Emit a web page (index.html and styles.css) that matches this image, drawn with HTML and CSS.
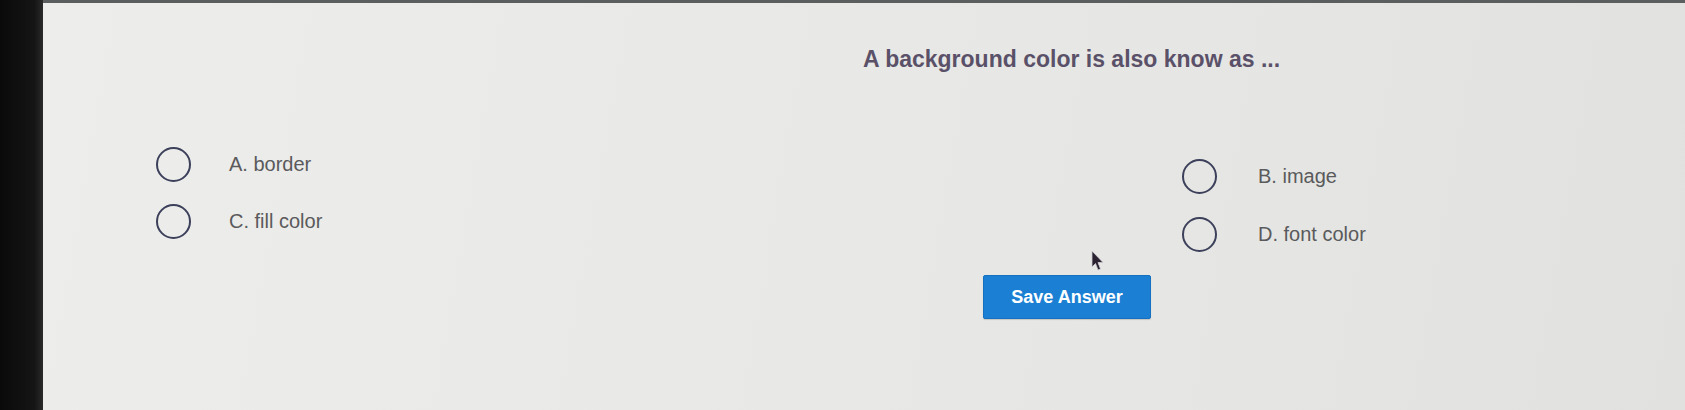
FILE: index.html
```html
<!DOCTYPE html>
<html>
<head>
<meta charset="utf-8">
<link rel="stylesheet" href="styles.css">
</head>
<body>
<div class="screen">
  <div class="bezel"></div>
  <div class="main">
    <h1 class="question">A background color is also know as ...</h1>
    <div class="options">
      <div class="col col-left">
        <label class="option"><span class="radio"></span><span class="label">A. border</span></label>
        <label class="option"><span class="radio"></span><span class="label">C. fill color</span></label>
      </div>
      <div class="col col-right">
        <label class="option"><span class="radio"></span><span class="label">B. image</span></label>
        <label class="option"><span class="radio"></span><span class="label">D. font color</span></label>
      </div>
    </div>
    <div class="actions">
      <button class="save">Save Answer</button>
    </div>
    <svg class="cursor" width="13" height="22" viewBox="0 0 13 22"><path d="M1 1 L1 17 L4.5 13.5 L7 20 L9.5 19 L7 12.5 L12 12.5 Z" fill="#2a2230" stroke="#cfcbd3" stroke-width="0.8"/></svg>
  </div>
</div>
</body>
</html>
```
FILE: styles.css
```css
html, body {
  margin: 0;
  padding: 0;
  width: 1685px;
  height: 410px;
  overflow: hidden;
}
body {
  font-family: "Liberation Sans", Arial, sans-serif;
  background: #e6e7e4;
}
.screen {
  display: flex;
  width: 1685px;
  height: 410px;
}
.bezel {
  width: 43px;
  flex: none;
  background: linear-gradient(90deg, #0a0a0a 0%, #151515 80%, #2a2a2a 100%);
}
.main {
  position: relative;
  flex: 1;
  border-top: 3px solid #5a5e5e;
  background: linear-gradient(100deg, #ededeb 0%, #e9eae7 40%, #e5e6e3 75%, #e1e2df 100%);
  display: flex;
  flex-direction: column;
}
.question {
  margin: 42px 0 0 820px;
  font-size: 23px;
  line-height: 28px;
  font-weight: bold;
  color: #5a5169;
}
.options {
  display: grid;
  grid-template-columns: 1026px auto;
  margin: 74px 0 0 113px;
}
.col {
  display: flex;
  flex-direction: column;
  gap: 23px;
}
.col-right {
  padding-top: 12px;
  gap: 24px;
}
.option {
  display: flex;
  align-items: center;
  height: 34px;
}
.radio {
  width: 31px;
  height: 31px;
  border: 2px solid #3c405a;
  border-radius: 50%;
  flex: none;
}
.label {
  margin-left: 38px;
  font-size: 20px;
  line-height: 34px;
  color: #5a5a5c;
}
.col-right .label {
  margin-left: 41px;
}
.actions {
  margin: 24px 0 0 940px;
}
.save {
  width: 168px;
  height: 44px;
  background: #1b7fd3;
  border: 1px solid #1570c0;
  border-radius: 2px;
  color: #ffffff;
  font-family: "Liberation Sans", Arial, sans-serif;
  font-weight: bold;
  font-size: 18px;
  padding: 0;
  box-shadow: 0 1px 1px rgba(0,0,0,0.15);
}
.cursor {
  position: absolute;
  left: 1048px;
  top: 247px;
}
```
